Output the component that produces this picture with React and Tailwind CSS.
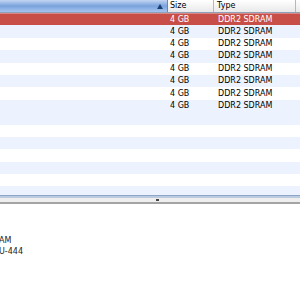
const rows = Array.from({ length: 8 }, () => ({ size: '4 GB', type: 'DDR2 SDRAM' }))
const empty = Array.from({ length: 7 })

const App = () => {
  return (
    <div className="w-[300px] h-[300px] overflow-hidden bg-white text-[8px] text-black" style={{ fontFamily: '"DejaVu Sans", "Liberation Sans", sans-serif' }}>
      {/* column header */}
      <div className="flex h-[13px] border-b border-[#8f9fb8]">
        <div className="w-[168px] flex items-center justify-end pr-[4px] bg-gradient-to-b from-[#c3d6f1] via-[#79a2dc] to-[#a7c6f0] border-r border-[#6c86ad]">
          <svg width="6" height="5" viewBox="0 0 6 5">
            <path d="M3 0 L6 5 L0 5 Z" fill="#1c3f73" />
          </svg>
        </div>
        <div className="w-[46px] pl-[2px] flex items-center bg-gradient-to-b from-white to-[#e9e9e9] border-r border-[#b8b8b8]">
          Size
        </div>
        <div className="w-[82px] pl-[3px] flex items-center bg-gradient-to-b from-white to-[#e9e9e9] border-r border-[#b8b8b8]">
          Type
        </div>
        <div className="flex-1 bg-gradient-to-b from-white to-[#e9e9e9]" />
      </div>

      {/* rows */}
      <div className="h-[182px] overflow-hidden">
        {rows.map((r, i) => (
          <div
            key={i}
            className={
              i === 0
                ? 'flex h-[12.4px] items-center bg-[#c84e48] text-white border-t border-[#d98a86]'
                : i % 2 === 1
                ? 'flex h-[12.4px] items-center bg-[#edf3fe]'
                : 'flex h-[12.4px] items-center bg-white'
            }
          >
            <div className="w-[168px]" />
            <div className="w-[46px] pl-[2px]">{r.size}</div>
            <div className="pl-[4px]">{r.type}</div>
          </div>
        ))}
        {empty.map((_, i) => (
          <div key={i} className={i % 2 === 0 ? 'h-[12.4px] bg-[#edf3fe]' : 'h-[12.4px] bg-white'} />
        ))}
      </div>

      {/* split bar */}
      <div className="h-[9px] flex flex-col">
        <div className="h-[1px] bg-[#8da5c6]" />
        <div className="h-[2px] bg-[#bccbdf]" />
        <div className="h-[4px] bg-[#eeeeee] flex justify-start pl-[156px]">
          <div className="w-[3px] h-[2px] mt-[1px] bg-[#444]" />
        </div>
        <div className="h-[2px] bg-[#a4a4a4]" />
      </div>

      {/* details */}
      <div className="pt-[31px] leading-[11px] text-[#222] -ml-[1px]">
        <div>AM</div>
        <div>U-444</div>
      </div>
    </div>
  )
}

export default App
